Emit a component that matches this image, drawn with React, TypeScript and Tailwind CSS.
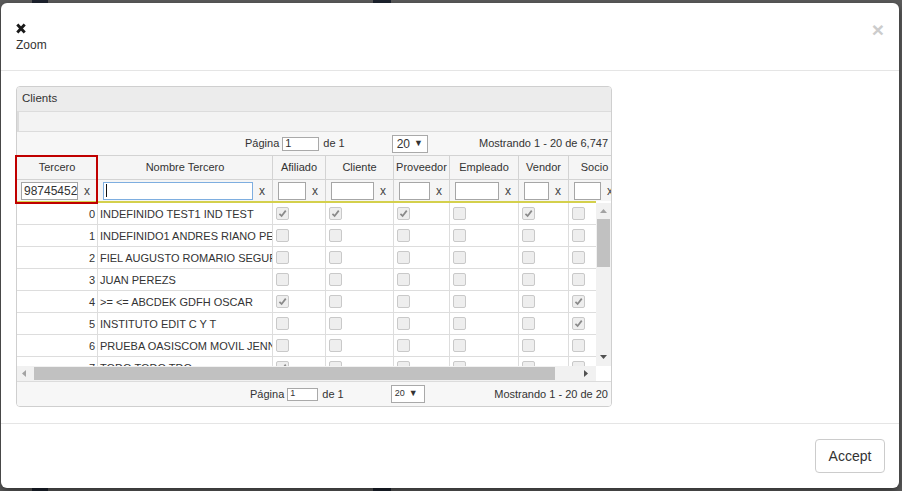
import React from 'react';

const cols = [
  { label: 'Tercero', w: 'w-[81px]' },
  { label: 'Nombre Tercero', w: 'w-[175px]' },
  { label: 'Afiliado', w: 'w-[53px]' },
  { label: 'Cliente', w: 'w-[68px]' },
  { label: 'Proveedor', w: 'w-[56px]' },
  { label: 'Empleado', w: 'w-[69px]' },
  { label: 'Vendor', w: 'w-[50px]' },
  { label: 'Socio', w: 'w-[52px]' },
];

const rows = [
  { id: 0, name: 'INDEFINIDO TEST1 IND TEST', c: [1, 1, 1, 0, 1, 0] },
  { id: 1, name: 'INDEFINIDO1 ANDRES RIANO PEREZ', c: [0, 0, 0, 0, 0, 0] },
  { id: 2, name: 'FIEL AUGUSTO ROMARIO SEGURA', c: [0, 0, 0, 0, 0, 0] },
  { id: 3, name: 'JUAN PEREZS', c: [0, 0, 0, 0, 0, 0] },
  { id: 4, name: '>= <= ABCDEK GDFH OSCAR', c: [1, 0, 0, 0, 0, 1] },
  { id: 5, name: 'INSTITUTO EDIT C Y T', c: [0, 0, 0, 0, 0, 1] },
  { id: 6, name: 'PRUEBA OASISCOM MOVIL JENNIFER', c: [0, 0, 0, 0, 0, 0] },
  { id: 7, name: 'TODO TODO TDO', c: [1, 0, 0, 0, 0, 0] },
];

function Cb({ on }: { on: boolean }) {
  return (
    <span className="ml-[3px] mt-[4px] flex h-[13px] w-[13px] items-center justify-center rounded-[2px] border border-[#c9c9c9] bg-[#eeeeee]">
      {on && (
        <svg viewBox="0 0 10 10" className="h-[9px] w-[9px]">
          <path d="M1.6 5.4 L4 7.8 L8.6 1.8" fill="none" stroke="#8a8a8a" strokeWidth="1.9" />
        </svg>
      )}
    </span>
  );
}

function Tri({ dir, color }: { dir: 'up' | 'down' | 'left' | 'right'; color: string }) {
  const d =
    dir === 'up'
      ? 'M0 4 L3.5 0 L7 4 Z'
      : dir === 'down'
      ? 'M0 0 L7 0 L3.5 4 Z'
      : dir === 'left'
      ? 'M4 0 L4 7 L0 3.5 Z'
      : 'M0 0 L4 3.5 L0 7 Z';
  const vertical = dir === 'up' || dir === 'down';
  return (
    <svg
      viewBox={vertical ? '0 0 7 4' : '0 0 4 7'}
      className={vertical ? 'h-[4px] w-[7px] shrink-0' : 'h-[7px] w-[4px] shrink-0'}
    >
      <path d={d} fill={color} />
    </svg>
  );
}

export default function App() {
  return (
    <div className="h-[491px] w-[902px] overflow-hidden bg-[linear-gradient(90deg,#5c5c5c_0,#5c5c5c_32px,#1e2430_32px,#1e2430_48px,#5c5c5c_48px,#5c5c5c_373px,#1e2430_373px,#1e2430_391px,#5c5c5c_391px)] pl-[1px] pt-[3px] font-['Liberation_Sans',Arial,sans-serif] text-[#333333]">
      <div className="flex h-[485px] w-[898px] flex-col rounded-[6px] bg-white shadow-[0_3px_9px_rgba(0,0,0,0.5)]">
        {/* Header */}
        <div className="flex h-[68px] shrink-0 items-start justify-between border-b border-[#e5e5e5] pl-[15px] pr-[15px] pt-[17px]">
          <div className="flex flex-col">
            <div className="flex h-[17px] items-center">
              <svg viewBox="0 0 10 11" className="h-[11px] w-[10px]">
                <path d="M1.3 1.6 L8.7 9.4 M8.7 1.6 L1.3 9.4" stroke="#1a1a1a" strokeWidth="2.9" strokeLinecap="butt" />
              </svg>
            </div>
            <div className="h-[17px] text-[12px] leading-[17px] text-[#333]">Zoom</div>
          </div>
          <div className="-mt-[1px] text-[21px] font-bold leading-none text-[#cccccc]">×</div>
        </div>

        {/* Body */}
        <div className="shrink-0 px-[15px] pb-[16px] pt-[15px]">
          <div className="relative w-[596px]">
            <div className="flex h-[321px] w-[596px] flex-col overflow-hidden rounded-[4px] border border-[#cfcfcf] text-[11px]">
              {/* caption */}
              <div className="flex h-[24px] shrink-0 items-center bg-[#ececec] pl-[5px] text-[11.5px] text-[#333]">Clients</div>
              {/* toolbar */}
              <div className="h-[20px] shrink-0 border-l-2 border-t border-[#dcdcdc] bg-[#f3f3f3]" />
              {/* top pager */}
              <div className="flex h-[24px] shrink-0 items-center border-t border-[#dcdcdc] bg-[#f7f7f7]">
                <span className="ml-[228px]">Página</span>
                <span className="ml-[3px] flex h-[14px] w-[37px] items-center border border-[#a9a9a9] bg-white pl-[2px] text-[11px]">1</span>
                <span className="ml-[4px]">de 1</span>
                <span className="ml-[47px] flex h-[18px] w-[36px] items-center border border-[#a9a9a9] bg-white pl-[4px] text-[12px]">
                  20 <span className="ml-[4px] text-[9px]">▼</span>
                </span>
                <span className="ml-auto pr-[3px]">Mostrando 1 - 20 de 6,747</span>
              </div>
              {/* header row */}
              <div className="flex h-[24px] shrink-0 border-t border-[#d3d3d3] bg-[#f5f5f5]">
                {cols.map((c) => (
                  <div
                    key={c.label}
                    className={`${c.w} flex shrink-0 items-center justify-center border-r border-[#d3d3d3] text-[11px]`}
                  >
                    {c.label}
                  </div>
                ))}
              </div>
              {/* filter row */}
              <div className="flex h-[22px] shrink-0 border-t border-[#d3d3d3] bg-[#f5f5f5]">
                {cols.map((c, i) => (
                  <div
                    key={c.label}
                    className={
                      i === 0
                        ? `${c.w} flex shrink-0 items-center border-r border-[#d3d3d3] pl-[4px]`
                        : `${c.w} flex shrink-0 items-center border-r border-[#d3d3d3] pl-[5px]`
                    }
                  >
                    <span
                      className={
                        i === 1
                          ? 'flex h-[18px] min-w-0 flex-1 items-center border border-[#7eaee0] bg-white pl-[2px] text-[12px]'
                          : 'flex h-[18px] min-w-0 flex-1 items-center border border-[#a6a6a6] bg-white pl-[2px] text-[12px]'
                      }
                    >
                      {i === 0 ? '98745452' : i === 1 ? <span className="h-[13px] w-[1px] bg-[#111]" /> : ''}
                    </span>
                    <span className="w-[19px] shrink-0 pl-[6px] text-[12px] text-[#444]">x</span>
                  </div>
                ))}
              </div>
              {/* yellow line */}
              <div className="flex h-[2px] shrink-0">
                <div className="w-[579px] bg-[#d4d04c]" />
              </div>
              {/* body */}
              <div className="flex h-[163px] shrink-0">
                <div className="h-[163px] w-[579px] overflow-hidden">
                  <div className="w-[604px]">
                    {rows.map((r) => (
                      <div key={r.id} className="flex h-[22px] border-b border-[#dddddd]">
                        <div className="w-[81px] shrink-0 border-r border-[#dddddd] pr-[2px] text-right leading-[22px]">{r.id}</div>
                        <div className="w-[175px] shrink-0 overflow-hidden whitespace-nowrap border-r border-[#dddddd] pl-[2px] leading-[22px]">
                          {r.name}
                        </div>
                        {r.c.map((v, i) => (
                          <div key={i} className={`${cols[i + 2].w} shrink-0 border-r border-[#dddddd]`}>
                            <Cb on={!!v} />
                          </div>
                        ))}
                      </div>
                    ))}
                  </div>
                </div>
                {/* vertical scrollbar */}
                <div className="flex h-[163px] w-[15px] shrink-0 flex-col items-center bg-[#f1f1f1] pt-[6px]">
                  <Tri dir="up" color="#a3a3a3" />
                  <div className="mt-[6px] h-[48px] w-[13px] bg-[#c1c1c1]" />
                  <div className="mt-[88px]">
                    <Tri dir="down" color="#505050" />
                  </div>
                </div>
              </div>
              {/* horizontal scrollbar */}
              <div className="flex h-[15px] shrink-0">
                <div className="flex h-[15px] w-[579px] items-center bg-[#f1f1f1] pl-[5px]">
                  <Tri dir="left" color="#a3a3a3" />
                  <div className="ml-[8px] h-[13px] w-[521px] bg-[#c1c1c1]" />
                  <div className="ml-[29px]">
                    <Tri dir="right" color="#505050" />
                  </div>
                </div>
                <div className="w-[15px] bg-white" />
              </div>
              {/* bottom pager */}
              <div className="flex h-[25px] shrink-0 items-center border-t border-[#dcdcdc] bg-[#f7f7f7]">
                <span className="ml-[233px]">Página</span>
                <span className="ml-[3px] flex h-[13px] w-[31px] items-center border border-[#a9a9a9] bg-white pl-[2px] text-[9px]">1</span>
                <span className="ml-[4px]">de 1</span>
                <span className="ml-[47px] flex h-[18px] w-[34px] items-center border border-[#a9a9a9] bg-white pl-[3px] text-[9px]">
                  20 <span className="ml-[4px] text-[9px]">▼</span>
                </span>
                <span className="ml-auto pr-[3px]">Mostrando 1 - 20 de 20</span>
              </div>
            </div>
            {/* highlight */}
            <div className="absolute left-[-1px] top-[69px] h-[49px] w-[83px] border-2 border-[#c00000]" />
          </div>
        </div>

        {/* Footer */}
        <div className="flex flex-1 items-start justify-end border-t border-[#e5e5e5] pl-[15px] pr-[14px] pt-[15px]">
          <button className="h-[34px] w-[70px] rounded-[4px] border border-[#cccccc] bg-white text-[14px] text-[#333]">
            Accept
          </button>
        </div>
      </div>
    </div>
  );
}
